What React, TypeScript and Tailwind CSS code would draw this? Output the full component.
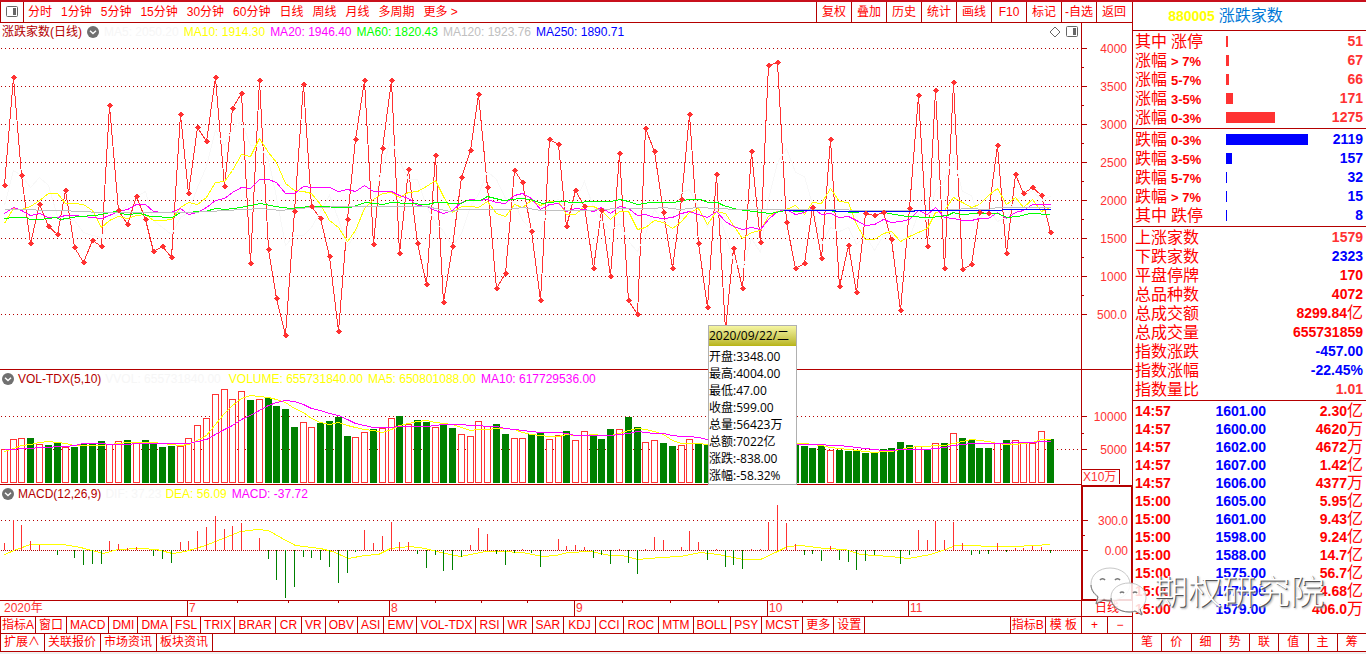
import type { ReactNode } from 'react';

const LINE = '#b40000';
const UP = '#ff3232';
const STEP = 8.788;

const periods = ['分时', '1分钟', '5分钟', '15分钟', '30分钟', '60分钟', '日线', '周线', '月线', '多周期', '更多 >'];
const actions = ['复权', '叠加', '历史', '统计', '画线', 'F10', '标记', '-自选', '返回'];
const indicators = [
  '指标A', '窗口', 'MACD', 'DMI', 'DMA', 'FSL', 'TRIX', 'BRAR', 'CR', 'VR', 'OBV', 'ASI', 'EMV', 'VOL-TDX',
  'RSI', 'WR', 'SAR', 'KDJ', 'CCI', 'ROC', 'MTM', 'BOLL', 'PSY', 'MCST', '更多', '设置',
];
const roomy = ['CR', 'WR', 'KDJ', 'ROC'];
const links = ['扩展∧', '关联报价', '市场资讯', '板块资讯'];
const sideTabs = ['笔', '价', '细', '势', '联', '值', '主', '筹'];

// vertical positions in the chart area, one per trading day
const closes = [
  185, 77, 175, 243, 204, 226, 234, 190, 247, 262, 240, 246, 105, 210, 224, 196, 219, 251, 246, 257,
  114, 193, 127, 141, 77, 186, 108, 93, 263, 80, 249, 298, 335, 211, 84, 206, 218, 256, 331, 219,
  139, 80, 244, 148, 80, 253, 169, 243, 284, 155, 302, 246, 177, 150, 94, 187, 288, 273, 170, 182,
  231, 300, 139, 144, 226, 190, 206, 268, 210, 276, 153, 300, 314, 128, 151, 212, 268, 199, 114, 243,
  307, 174, 330, 248, 288, 151, 242, 65, 62, 222, 268, 263, 207, 258, 139, 286, 245, 292, 213, 215,
  212, 239, 310, 208, 95, 246, 90, 268, 82, 269, 264, 212, 213, 145, 253, 174, 193, 187, 195, 232,
];
const volumes = [
  449, 439, 438, 438, 444, 445, 443, 447, 447, 444, 444, 441, 444, 441, 440, 443, 440, 444, 447, 446,
  446, 438, 425, 418, 394, 389, 399, 391, 400, 399, 398, 406, 409, 427, 422, 427, 423, 421, 417, 436,
  437, 432, 429, 428, 418, 416, 424, 420, 422, 427, 424, 428, 434, 436, 421, 426, 424, 434, 438, 438,
  434, 432, 439, 435, 431, 440, 431, 435, 439, 429, 429, 417, 427, 442, 440, 443, 446, 445, 439, 444,
  444, 444, 446, 445, 446, 444, 444, 442, 440, 443, 444, 446, 448, 446, 450, 450, 451, 451, 453, 453,
  449, 448, 442, 445, 446, 449, 443, 443, 433, 438, 440, 448, 448, 443, 440, 440, 442, 443, 431, 439,
];
const volumeSides =
  'rrrgrggrggggrrgrggggrrrrrrrrgrggggrrgggg' +
  'rrgrrgrggrggrrrrggrrggrrgrrgggrggrrggrrg' +
  'grggggrgrgggggrggggggggg' + 'rgrgrggggrgrrrrg';
const macd = [
  543, 520, 525, 541, 545, 550, 555, 550, 558, 565, 564, 564, 541, 544, 548, 547, 550, 556, 559, 563,
  542, 541, 531, 527, 516, 529, 526, 523, 550, 538, 559, 580, 598, 587, 557, 558, 560, 567, 583, 573,
  552, 530, 543, 536, 522, 542, 542, 554, 568, 555, 571, 570, 557, 545, 528, 534, 554, 565, 553, 549,
  553, 567, 550, 539, 546, 545, 547, 558, 555, 564, 549, 563, 574, 549, 537, 540, 550, 547, 531, 542,
  560, 549, 567, 565, 569, 549, 549, 522, 505, 523, 544, 555, 554, 561, 546, 560, 562, 570, 561, 555,
  550, 551, 564, 555, 530, 540, 521, 540, 522, 543, 555, 554, 554, 543, 552, 548, 548, 546, 547, 553,
];
const ma60 =
  '4,218 13,217 25,217 30,219 40,219 55,217 60,219 78,216 95,215 105,213 115,211 125,214 140,213 150,216 172,217 180,212 205,211 215,208 225,209 240,207 260,203 275,206 290,208 310,206 350,207 365,202 383,204 390,202 427,204 435,202 460,203 467,200 480,200 487,196 503,200 520,198 530,199 542,203 557,201 577,202 590,201 610,201 620,199 628,201 637,204 650,202 673,202 688,199 700,199 708,202 717,202 723,205 737,209 770,213 785,210 800,211 807,210 825,210 837,211 857,212 863,210 878,210 888,213 907,216 930,217 947,215 953,212 960,214 977,213 997,213 1007,217 1017,216 1030,213 1050,214';
const ma120 =
  '4,209 30,209 40,210 60,210 100,212 190,212 225,210 260,208 280,210 310,207 350,206 427,206 435,208 450,211 460,209 507,209 523,207 540,210 587,210 617,208 653,208 663,207 680,209 697,207 737,209 843,209 853,210 940,210 967,208 987,209 997,207 1050,207';
const ma250 = '783,210 833,210 837,211 913,211 915,210 1000,210 1003,209 1050,209';
const dea =
  '4,554 16,549 30,544 62,544 80,547 103,553 117,549 140,548 156,549 172,553 185,551 205,545 220,539 240,531 257,529 268,530 280,537 295,545 320,548 332,551 348,558 364,555 378,554 390,548 410,546 425,548 440,552 460,556 485,551 500,551 522,552 542,556 555,555 568,552 590,551 610,555 622,555 637,559 660,557 680,556 700,552 718,554 743,559 760,559 775,552 787,546 800,545 825,548 845,549 860,554 890,556 908,558 930,554 945,549 955,545 970,545 990,546 1015,546 1050,544';

const xAt = (i: number) => Math.floor(4.4 + i * STEP);
const toPoints = (ys: number[]) => ys.map((y, i) => `${xAt(i)},${Math.round(y)}`).join(' ');

// the first n-1 days come from "lead", the rest is averaged
function average(values: number[], n: number, lead: number[]) {
  return values.map((_, i) =>
    i < n - 1 ? lead[i] : values.slice(i - n + 1, i + 1).reduce((a, b) => a + b, 0) / n
  );
}

const ma5 = average(closes, 5, [205, 170, 175, 187]);
const ma10 = average(closes, 10, [223, 208, 209, 206, 200, 193, 193, 203, 203]);
const ma20 = average(closes, 20, [213, 207, 210, 215, 213, 217, 217, 215, 215, 216, 217, 218, 215, 211, 209, 204, 204, 211, 212]);
const vol5 = average(volumes, 5, [451, 448, 445, 444]);
const vol10 = average(volumes, 10, [449, 449, 448, 448, 447, 447, 446, 446, 445]);

type Breadth = { name: string; range?: string; suffix?: string; value: number };

const rising: Breadth[] = [
  { name: '其中', suffix: '涨停', value: 51 },
  { name: '涨幅', range: '> 7%', value: 67 },
  { name: '涨幅', range: '5-7%', value: 66 },
  { name: '涨幅', range: '3-5%', value: 171 },
  { name: '涨幅', range: '0-3%', value: 1275 },
];
const falling: Breadth[] = [
  { name: '跌幅', range: '0-3%', value: 2119 },
  { name: '跌幅', range: '3-5%', value: 157 },
  { name: '跌幅', range: '5-7%', value: 32 },
  { name: '跌幅', range: '> 7%', value: 15 },
  { name: '其中', suffix: '跌停', value: 8 },
];

const stats = [
  { name: '上涨家数', value: '1579', unit: '', color: 'text-[#ff3232]' },
  { name: '下跌家数', value: '2323', unit: '', color: 'text-[#0000ff]' },
  { name: '平盘停牌', value: '170', unit: '', color: 'text-[#ff0000]' },
  { name: '总品种数', value: '4072', unit: '', color: 'text-[#ff0000]' },
  { name: '总成交额', value: '8299.84', unit: '亿', color: 'text-[#ff0000]' },
  { name: '总成交量', value: '655731859', unit: '', color: 'text-[#ff0000]' },
  { name: '指数涨跌', value: '-457.00', unit: '', color: 'text-[#0000ff]' },
  { name: '指数涨幅', value: '-22.45%', unit: '', color: 'text-[#0000ff]' },
  { name: '指数量比', value: '1.01', unit: '', color: 'text-[#ff3232]' },
];

const trades = [
  ['14:57', '1601.00', '2.30', '亿'],
  ['14:57', '1600.00', '4620', '万'],
  ['14:57', '1602.00', '4672', '万'],
  ['14:57', '1607.00', '1.42', '亿'],
  ['14:57', '1606.00', '4377', '万'],
  ['15:00', '1605.00', '5.95', '亿'],
  ['15:00', '1601.00', '9.43', '亿'],
  ['15:00', '1598.00', '9.24', '亿'],
  ['15:00', '1588.00', '14.7', '亿'],
  ['15:00', '1575.00', '56.7', '亿'],
  ['15:00', '1578.00', '4.68', '亿'],
  ['15:00', '1579.00', '406.0', '万'],
];

const quote = [
  '开盘:3348.00', '最高:4004.00', '最低:47.00', '收盘:599.00',
  '总量:56423万', '总额:7022亿', '涨跌:-838.00', '涨幅:-58.32%',
];

function SplitIcon() {
  return (
    <svg width="12" height="12" viewBox="0 0 12 12" fill="none">
      <rect x="0.5" y="0.5" width="11" height="10" rx="1" stroke="#666" />
      <rect x="7" y="2" width="3" height="7" fill="#666" />
    </svg>
  );
}

function Collapse() {
  return (
    <button aria-label="折叠" className="shrink-0">
      <svg width="12" height="12" viewBox="0 0 12 12" fill="none">
        <circle cx="6" cy="6" r="6" fill="#707070" />
        <path d="M3 4.8 6 7.6 9 4.8" stroke="#fff" strokeWidth="1.4" />
      </svg>
    </button>
  );
}

function Plot({ box, className, children }: { box: string; className: string; children: ReactNode }) {
  return (
    <svg viewBox={box} preserveAspectRatio="none" shapeRendering="crispEdges" fill="none" className={`block w-full ${className}`}>
      {children}
    </svg>
  );
}

function Grid({ ys }: { ys: number[] }) {
  return (
    <>
      {ys.map((y) => (
        <line key={y} x1="1" x2="1081" y1={y + 0.5} y2={y + 0.5} stroke={LINE} strokeDasharray="1 3" />
      ))}
    </>
  );
}

function Curve({ points, color }: { points: string; color: string }) {
  return <polyline points={points} stroke={color} transform="translate(0.5 0.5)" />;
}

function Axis({ box, className, major, minor }: { box: string; className: string; major: [number, string][]; minor: number[] }) {
  return (
    <svg viewBox={box} className={`block w-full ${className}`} fontSize="12" fill={UP}>
      {major.map(([y, label]) => (
        <g key={label}>
          <rect x="0" y={y} width="5" height="1" fill={LINE} />
          <text x="45" y={y + 5} textAnchor="end">{label}</text>
        </g>
      ))}
      {minor.map((y) => (
        <rect key={y} x="0" y={y} width="2" height="1" fill={LINE} />
      ))}
    </svg>
  );
}

function BreadthTable({ rows, bar, text }: { rows: Breadth[]; bar: string; text: string }) {
  return (
    <table className="my-px w-full table-fixed border-collapse">
      <tbody>
        {rows.map((row) => (
          <tr key={row.name + (row.range ?? row.suffix)} className="h-[19px]">
            <th className="w-[93px] p-0 pl-0.5 text-left text-base leading-[19px] font-normal text-[#ff0000]">
              {row.name}
              {row.range ? (
                <span className="ml-1 text-[13px] leading-none font-bold">{row.range}</span>
              ) : (
                <span className="ml-1">{row.suffix}</span>
              )}
            </th>
            <td className="p-0">
              <div className={`h-[11px] ${bar}`} style={{ width: Math.max(1, Math.round(row.value * 0.0386)) }} />
            </td>
            <td className={`w-12 p-0 pr-[3px] text-right text-sm leading-[19px] font-bold ${text}`}>{row.value}</td>
          </tr>
        ))}
      </tbody>
    </table>
  );
}

function Watermark() {
  return (
    <div className="pointer-events-none absolute bottom-4 -left-[43px] flex items-center gap-1.5">
      <svg width="58" height="50" viewBox="0 0 58 50" fill="#fff" fillOpacity="0.85" stroke="#c8c8c8">
        <path d="M20 1C9 1 1 8 1 17c0 5 3 9 7 12l-2 7 8-4c2 1 4 1 7 1 11 0 19-7 19-16S31 1 20 1Z" />
        <path d="M1 18c0 5 3 9 7 12l-2 7 8-4c2 1 4 1 7 1" fill="none" stroke="#777" />
        <path d="M39 16c-10 0-18 6-18 14s8 15 18 15c2 0 4 0 6-1l7 4-2-6c4-3 6-7 6-12 0-8-8-14-17-14Z" />
        <path d="M21 31c0 8 8 14 18 14 2 0 4 0 6-1l7 4-2-6" fill="none" stroke="#777" />
        <path d="M10 13a3 3 0 0 1 5 0M25 13a3 3 0 0 1 5 0M30 26a2.500 2.500 0 0 1 4 0M43 26a2.500 2.500 0 0 1 4 0" fill="none" stroke="#777" strokeWidth="1.500" />
      </svg>
      <span className="text-[34px] leading-[40px] font-light whitespace-nowrap text-white [text-shadow:1px_1px_0_#555,2px_2px_2px_#aaa]">期权研究院</span>
    </div>
  );
}

export default function App() {
  return (
    <div className="min-h-screen bg-[#f0f0f0] font-['Liberation_Sans','Noto_Sans_CJK_SC',sans-serif] text-xs">
      <div className="flex border-t-2 border-b border-t-[#c8101c] border-b-[#b40000] bg-white">
        <main className="min-w-0 flex-1">
          <nav className="flex h-[21px] items-stretch border-b border-[#b40000] text-[#ff0000]">
            <button aria-label="布局" className="flex w-6 items-center justify-center border-x border-[#b40000]">
              <SplitIcon />
            </button>
            <div className="flex flex-1 items-center gap-[9px] pl-1 whitespace-nowrap">
              {periods.map((p) => (
                <button key={p}>{p}</button>
              ))}
            </div>
            {actions.map((a) => (
              <button key={a} className="w-[35px] border-l border-[#b40000] whitespace-nowrap">{a}</button>
            ))}
            <div className="w-px" />
          </nav>

          <div className="relative">
            <section className="flex border-b border-[#b40000]">
              <div className="min-w-0 flex-1">
                <header className="flex h-[18px] items-center gap-[5px] pl-0.5 whitespace-nowrap">
                  <h2 className="text-[#b40000]">涨跌家数(日线)</h2>
                  <Collapse />
                  <span className="text-[#f6f6f6]">MA5: 2050.20</span>
                  <span className="text-[#ffff00]">MA10: 1914.30</span>
                  <span className="text-[#ff00ff]">MA20: 1946.40</span>
                  <span className="text-[#00ff00]">MA60: 1820.43</span>
                  <span className="text-[#c0c0c0]">MA120: 1923.76</span>
                  <span className="flex-1 text-[#0000ff]">MA250: 1890.71</span>
                  <svg width="12" height="12" viewBox="0 0 12 12" fill="none">
                    <path d="M6 1 11 6 6 11 1 6Z" stroke="#666" />
                  </svg>
                  <span className="mr-[3px]"><SplitIcon /></span>
                </header>
                <Plot box="0 41 1081 328" className="h-[328px]">
                  <Grid ys={[48, 86, 124, 162, 200, 238, 276, 314]} />
                  <Curve points={toPoints(closes)} color={UP} />
                  <Curve points={toPoints(ma5)} color="#f8f8f8" />
                  <Curve points={toPoints(ma10)} color="#ffff00" />
                  <Curve points={toPoints(ma20)} color="#ff00ff" />
                  <Curve points={ma60} color="#00ff00" />
                  <Curve points={ma120} color="#c0c0c0" />
                  <Curve points={ma250} color="#0000ff" />
                  {closes.map((y, i) => (
                    <path key={i} d={`M${xAt(i) - 2.5} ${y + 0.5}l3-3 3 3-3 3Z`} fill={UP} />
                  ))}
                </Plot>
              </div>
              <div className="w-[51px] border-l border-[#b40000]">
                <Axis
                  box="0 23 50 346"
                  className="h-[346px]"
                  major={[[48, '4000'], [86, '3500'], [124, '3000'], [162, '2500'], [200, '2000'], [238, '1500'], [276, '1000'], [314, '500.0']]}
                  minor={[67, 105, 143, 181, 219, 257, 295]}
                />
              </div>
            </section>

            <section className="flex">
              <div className="min-w-0 flex-1 border-b border-[#b40000]">
                <header className="flex h-[17px] items-center gap-1 pl-0.5 whitespace-nowrap">
                  <Collapse />
                  <h2 className="text-[#b40000]">VOL-TDX(5,10)</h2>
                  <span className="mr-1 text-[#f6f6f6]">VVOL: 655731840.00</span>
                  <span className="mr-px text-[#ffff00]">VOLUME: 655731840.00</span>
                  <span className="mr-px text-[#ffff00]">MA5: 650801088.00</span>
                  <span className="text-[#ff00ff]">MA10: 617729536.00</span>
                </header>
                <Plot box="0 387 1081 97" className="h-[97px]">
                  <Grid ys={[416, 449]} />
                  {volumes.map((y, i) =>
                    volumeSides[i] === 'r' ? (
                      <rect key={i} x={xAt(i) - 2.5} y={y + 0.5} width="6" height={482 - y} fill="#fff" stroke={UP} />
                    ) : (
                      <rect key={i} x={xAt(i) - 3} y={y} width="7" height={483 - y} fill="#008000" />
                    )
                  )}
                  <Curve points={toPoints(vol5)} color="#ffff00" />
                  <Curve points={toPoints(vol10)} color="#ff00ff" />
                </Plot>
              </div>
              <div className="flex w-[51px] flex-col border-l border-[#b40000]">
                <Axis box="0 370 50 99" className="h-[99px]" major={[[416, '10000'], [449, '5000']]} minor={[433]} />
                <span className="h-[15px] w-[38px] border-t border-r border-[#b40000] pl-px leading-[14px] text-[#ff3232]">X10万</span>
              </div>
            </section>

            <section className="flex">
              <div className="min-w-0 flex-1 border-b border-[#b40000]">
                <header className="flex h-[17px] items-center gap-1 pl-0.5 whitespace-nowrap">
                  <Collapse />
                  <h2 className="text-[#b40000]">MACD(12,26,9)</h2>
                  <span className="text-[#f6f6f6]">DIF: 37.23</span>
                  <span className="mr-px text-[#ffff00]">DEA: 56.09</span>
                  <span className="text-[#ff00ff]">MACD: -37.72</span>
                </header>
                <Plot box="0 502 1081 98" className="h-[98px]">
                  <Grid ys={[520]} />
                  <line x1="1" x2="1081" y1="550.5" y2="550.5" stroke={LINE} strokeDasharray="1 1" />
                  <Curve points={dea} color="#ffff00" />
                  {macd.map((y, i) => (
                    <rect
                      key={i}
                      x={xAt(i)}
                      y={Math.min(y, 550)}
                      width="1"
                      height={Math.abs(y - 550)}
                      fill={y < 550 ? UP : '#008000'}
                    />
                  ))}
                </Plot>
              </div>
              <div className="w-[51px] border-2 border-r border-[#b40000]">
                <Axis box="0 487 48 112" className="h-[112px]" major={[[520, '300.0'], [550, '0.00']]} minor={[535]} />
              </div>
            </section>

            <div className="absolute top-[302px] left-[708px] w-[89px] border border-[#b0b0b0] bg-white font-['Open_Sans','Noto_Sans_CJK_SC',sans-serif] whitespace-nowrap text-black">
              <p className="h-5 bg-linear-to-b from-[#f5f5a0] to-[#b8b410] leading-5">2020/09/22/二</p>
              <ul className="pt-0.5">
                {quote.map((q) => (
                  <li key={q} className="h-[17px] leading-[17px]">{q}</li>
                ))}
              </ul>
            </div>
          </div>

          <div className="flex h-4 border-b border-[#b40000] leading-[15px] text-[#ff3232]">
            <div className="grid flex-1 grid-cols-[187fr_202fr_185fr_193fr_141fr_173fr]">
              <span className="pl-1">2020年</span>
              {['7', '8', '9', '10', '11'].map((m) => (
                <span key={m} className="relative border-l border-[#b40000] pl-px">
                  {m}
                  {m !== '11' && (
                    <i className="absolute inset-x-0 top-0 grid h-0.5 grid-cols-4 divide-x divide-[#b40000]">
                      <b /><b /><b /><b />
                    </i>
                  )}
                </span>
              ))}
            </div>
            <button className="w-[51px] border-l border-[#b40000] text-[#ff0000]">日线</button>
          </div>

          <div className="flex h-[17px] border-b border-l border-[#b40000] leading-4 whitespace-nowrap text-[#ff0000]">
            {indicators.map((name, i) => (
              <button
                key={name}
                className={`border-r border-[#b40000] ${i === 0 ? 'px-px' : roomy.includes(name) ? 'px-1' : 'px-[3px]'}`}
              >
                {name}
              </button>
            ))}
            <div className="flex-1" />
            <button className="border-l border-[#b40000] px-px">指标B</button>
            <button className="border-l border-[#b40000] px-1">模 板</button>
            <button aria-label="放大" className="w-[26px] border-l border-[#b40000]">+</button>
            <button aria-label="缩小" className="w-[25px] border-l border-[#b40000]">−</button>
          </div>

          <div className="flex h-[17px] border-l border-[#b40000] leading-[17px] text-[#ff0000]">
            {links.map((name) => (
              <a key={name} href="#" className="border-r border-[#b40000] pr-1 pl-[3px]">{name}</a>
            ))}
          </div>
        </main>

        <aside className="flex w-[234px] shrink-0 flex-col border-l border-[#b40000]">
          <h1 className="flex h-[29px] items-center justify-center gap-1 border-b border-[#b40000] pr-12 text-base font-normal text-[#0078d7]">
            <span className="text-sm font-bold text-[#ffff00]">880005</span>
            涨跌家数
          </h1>
          <div className="border-b border-[#b40000]">
            <BreadthTable rows={rising} bar="bg-[#ff3232]" text="text-[#ff3232]" />
          </div>
          <div className="border-b border-[#b40000]">
            <BreadthTable rows={falling} bar="bg-[#0000ff]" text="text-[#0000ff]" />
          </div>
          <div className="border-b border-[#b40000]">
            <table className="my-px w-full border-collapse">
              <tbody>
                {stats.map((s) => (
                  <tr key={s.name} className="h-[19px]">
                    <th className="p-0 pl-0.5 text-left text-base leading-[19px] font-normal text-[#ff0000]">{s.name}</th>
                    <td className={`p-0 pr-[3px] text-right text-sm leading-[19px] font-bold ${s.color}`}>
                      {s.value}
                      {s.unit && <span className="text-base leading-none font-normal">{s.unit}</span>}
                    </td>
                  </tr>
                ))}
              </tbody>
            </table>
          </div>
          <div className="relative flex-1 border-b border-[#b40000]">
            <table className="mt-px w-full table-fixed border-collapse text-sm leading-[18px] font-bold">
              <tbody>
                {trades.map(([time, price, amount, unit], i) => (
                  <tr key={i} className="h-[18px]">
                    <td className="w-14 p-0 pl-0.5 text-[#ff0000]">{time}</td>
                    <td className="w-[77px] p-0 text-right text-[#0000ff]">{price}</td>
                    <td className="p-0 pr-[3px] text-right text-[#ff0000]">
                      {amount}
                      <span className="text-base leading-none font-normal">{unit}</span>
                    </td>
                  </tr>
                ))}
              </tbody>
            </table>
            <Watermark />
          </div>
          <div className="flex h-[17px] text-[#ff0000]">
            {sideTabs.map((t) => (
              <button key={t} className="flex-1 border-l border-[#b40000] leading-[17px] first:border-l-0">{t}</button>
            ))}
          </div>
        </aside>
      </div>
    </div>
  );
}
